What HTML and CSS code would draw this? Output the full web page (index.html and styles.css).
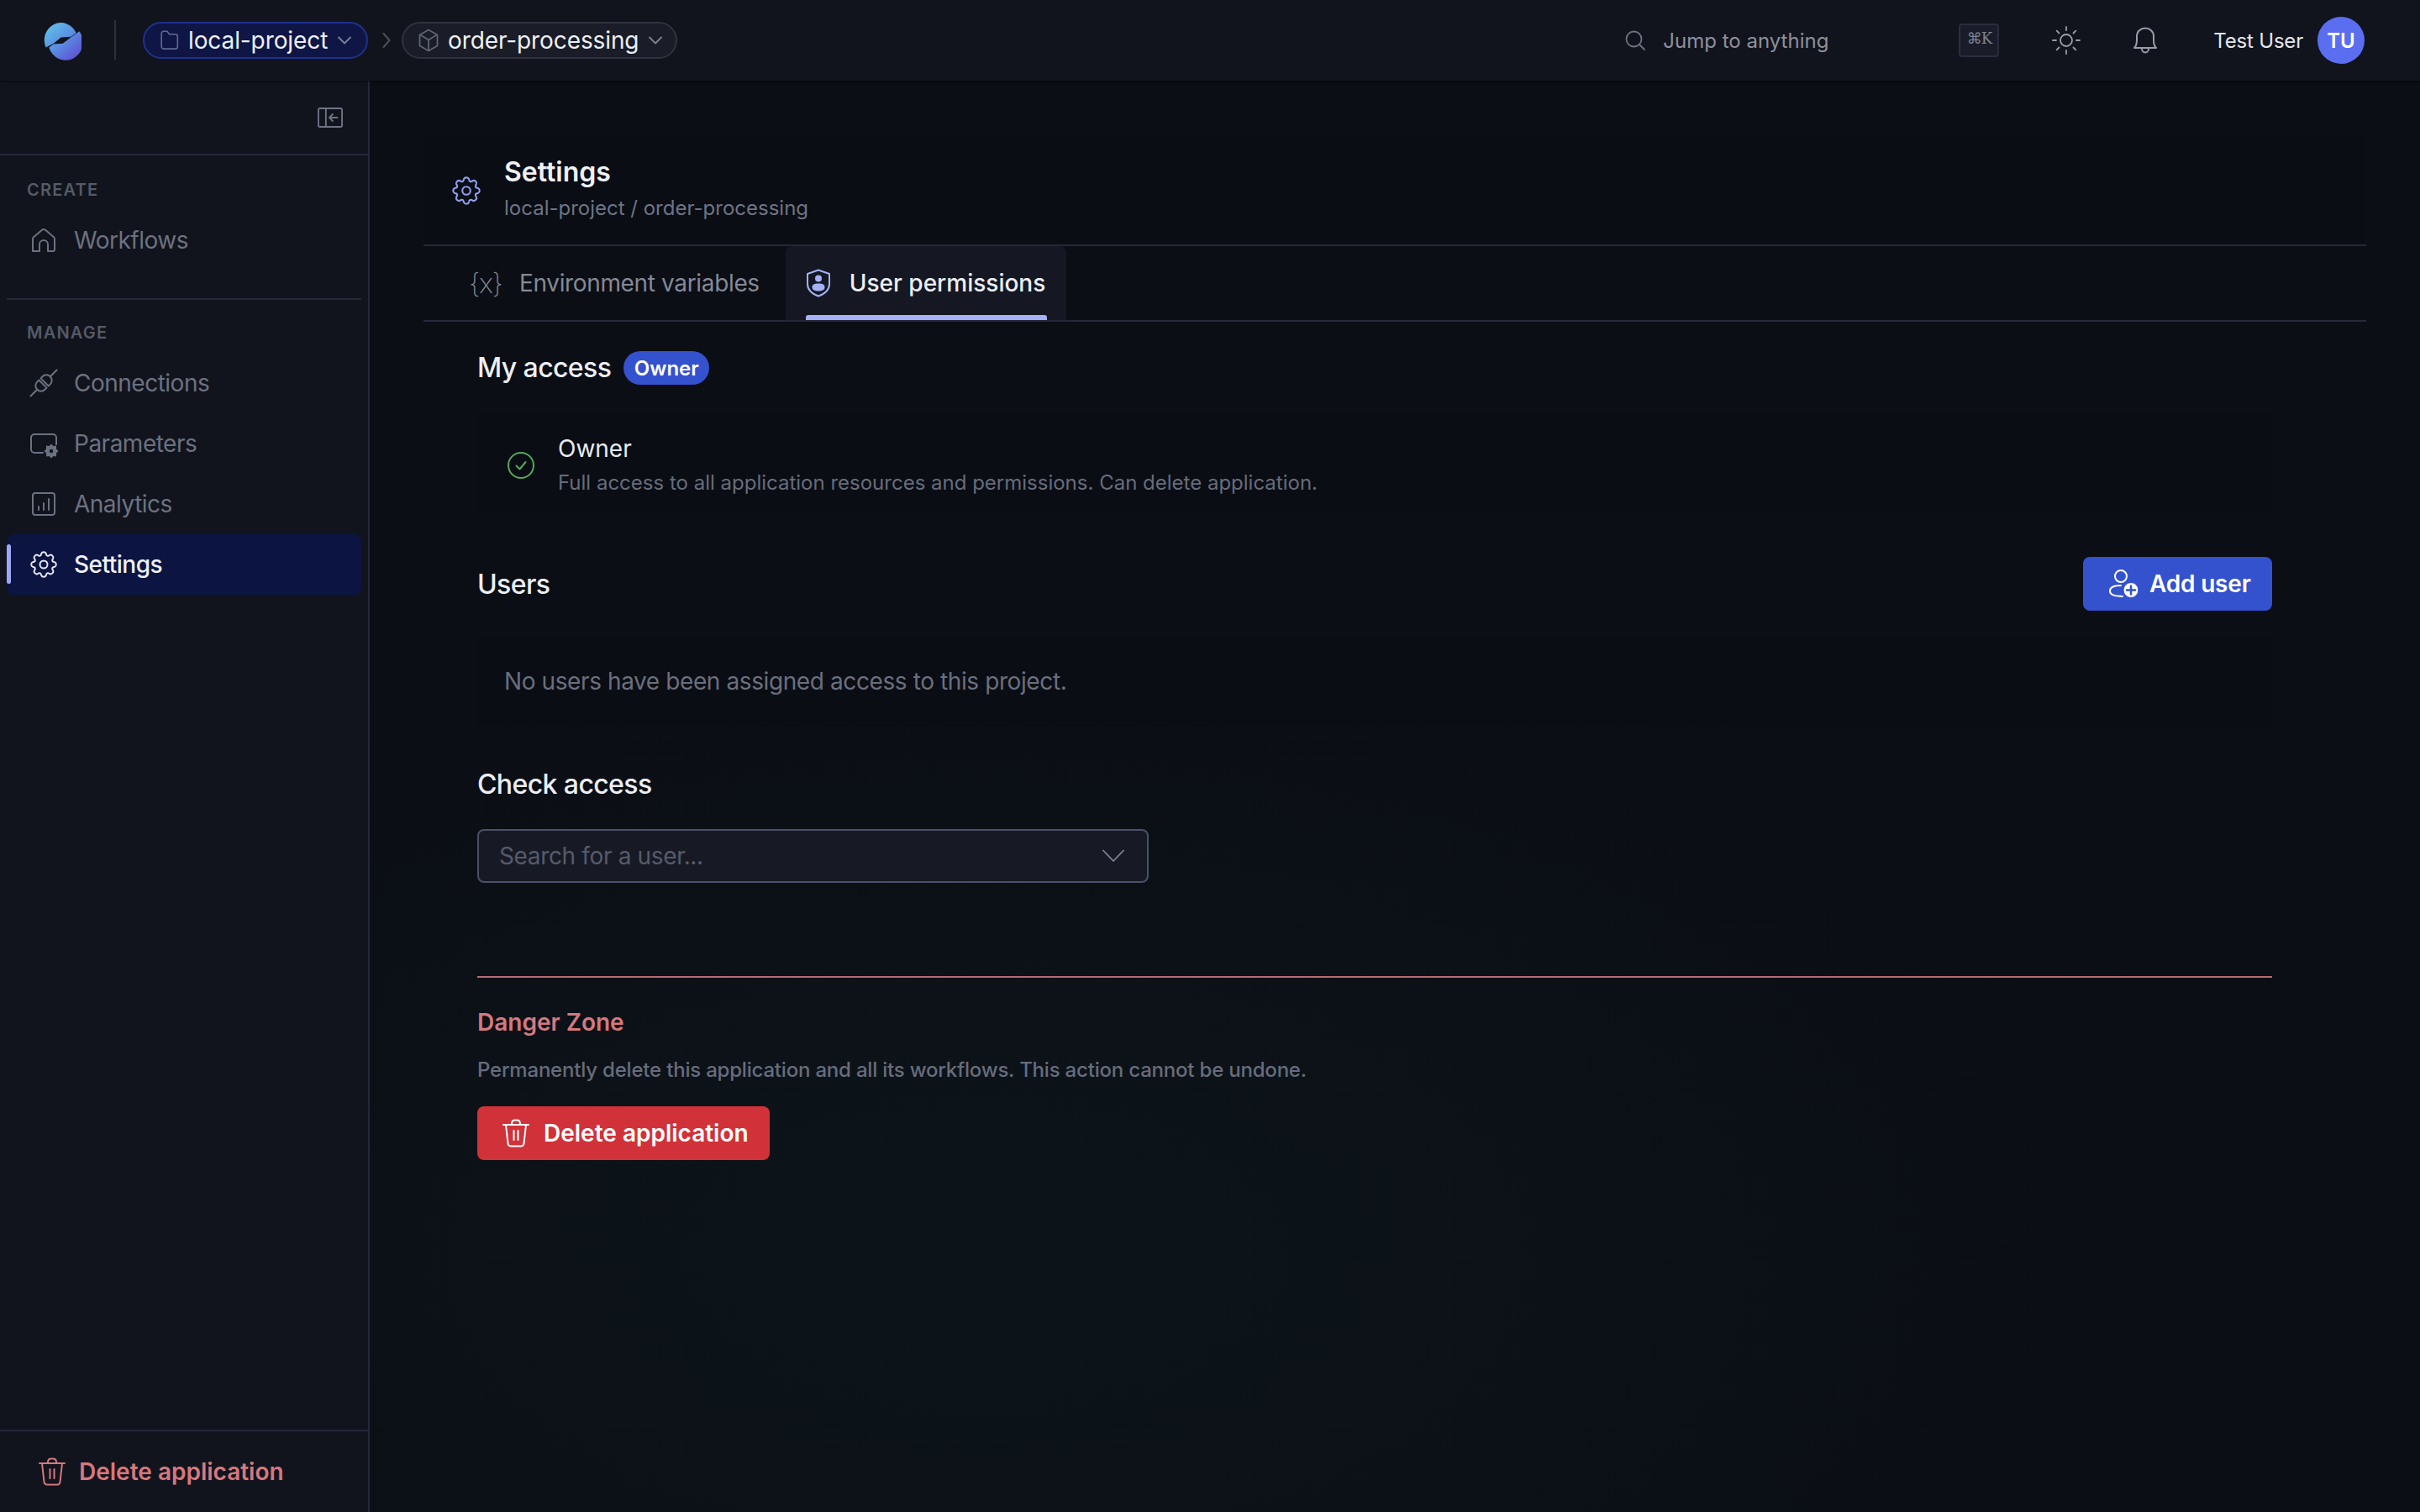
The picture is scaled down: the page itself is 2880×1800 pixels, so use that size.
FILE: index.html
```html
<!DOCTYPE html>
<html lang="en">
<head>
<meta charset="utf-8">
<title>Settings</title>
<link rel="stylesheet" href="styles.css">
</head>
<body>
<header class="topbar">
  <div class="top-left">
    <svg class="logo" viewBox="38 25 142 148" preserveAspectRatio="none"><defs><linearGradient id="lg" gradientUnits="userSpaceOnUse" x1="60" y1="40" x2="160" y2="160"><stop offset="0" stop-color="#5fc0ea"/><stop offset="0.5" stop-color="#5b90e2"/><stop offset="1" stop-color="#5c55d4"/></linearGradient></defs><path d="M46 126A62 62 0 1 1 160 74L140 88 103 90 75 112Z" fill="url(#lg)"/><path d="M172 68A65 65 0 1 1 58 126L75 114 110 112 140 90Z" fill="url(#lg)"/></svg>
    <span class="vr"></span>
    <div class="pill pill-blue">
      <svg class="pi" viewBox="0 0 24 28"><path d="M1.500 5.500A3 3 0 0 1 4.500 2.500H9L12 6.500H20A3 3 0 0 1 23 9.500V23A3 3 0 0 1 20 26H4.500A3 3 0 0 1 1.500 23Z" transform="scale(.96)"/></svg>
      <span class="pill-text">local-project</span>
      <svg class="chev" viewBox="0 0 16 10"><path d="M1 1.500 8 8.500 15 1.500"/></svg>
    </div>
    <svg class="crumb" viewBox="0 0 10 20"><path d="M1.500 2 8.500 10 1.500 18"/></svg>
    <div class="pill pill-gray">
      <svg class="pi" viewBox="0 0 24 28"><path d="M12 1.500 22.500 7.500V20.500L12 26.500 1.500 20.500V7.500Z"/><path d="M3 8 12 13.500 21 8M12 13.500V26"/></svg>
      <span class="pill-text">order-processing</span>
      <svg class="chev" viewBox="0 0 16 10"><path d="M1 1.500 8 8.500 15 1.500"/></svg>
    </div>
  </div>
  <div class="top-right">
    <div class="search">
      <svg class="search-ico" viewBox="0 0 24 24"><circle cx="10.500" cy="10.500" r="9"/><path d="M17 17 23 23"/></svg>
      <span class="search-text">Jump to anything</span>
    </div>
    <kbd class="kbd">⌘K</kbd>
    <svg class="sun" viewBox="0 0 34 34"><circle cx="17" cy="17" r="7"/><path d="M17 1V5M17 29V33M1 17H5M29 17H33M5.700 5.700 8.500 8.500M25.500 25.500 28.300 28.300M5.700 28.300 8.500 25.500M25.500 8.500 28.300 5.700"/></svg>
    <svg class="bell" viewBox="0 0 30 32"><path d="M2 25C4 23 5 20 5 16V11C5 5.500 9.500 1.500 15 1.500S25 5.500 25 11V16C25 20 26 23 28 25Z"/><path d="M11 26C11 29 13 30.500 15 30.500S19 29 19 26"/></svg>
    <span class="uname">Test User</span>
    <span class="avatar">TU</span>
  </div>
</header>
<div class="shell">
  <aside class="sidebar">
    <div class="collapse-row">
      <svg class="collapse" viewBox="0 0 32 24" preserveAspectRatio="none"><rect x="1" y="1" width="30" height="22" rx="2"/><path d="M10.500 1V23M25 12H15M19 8 15 12 19 16"/></svg>
    </div>
    <nav class="nav">
      <div class="sec sec-first">
        <div class="sec-label">CREATE</div>
        <a class="item"><svg class="ico" viewBox="0 0 32 32"><path d="M3 29V14.500C3 13.500 3.400 12.800 4 12.200L14 3.800C15.200 2.800 16.800 2.800 18 3.800L28 12.200C28.600 12.800 29 13.500 29 14.500V27C29 28.200 28 29 27 29H21V21A5 5 0 0 0 11 21V29H5C3.800 29 3 28.200 3 27Z"/></svg><span>Workflows</span></a>
      </div>
      <div class="sec">
        <div class="sec-label">MANAGE</div>
        <a class="item"><svg class="ico" viewBox="0 0 32 32"><g transform="rotate(-45 16 16)"><path d="M-6 16H5M27 16H38"/><path d="M14.500 9.500V22.500H11.500A6.500 6.500 0 0 1 11.500 9.500Z"/><path d="M17.500 9.500V22.500H20.500A6.500 6.500 0 0 0 20.500 9.500Z"/></g></svg><span>Connections</span></a>
        <a class="item"><svg class="ico" viewBox="0 0 32 32"><path d="M15 27H5A4 4 0 0 1 1 23V9A4 4 0 0 1 5 5H27A4 4 0 0 1 31 9V17"/><path class="solid" d="M25 16.500 27.500 19 31 18.500 31 22.500 33.500 25 31 27.500 31 31.500 27.500 31 25 33.500 22.500 31 19 31.500 19 27.500 16.500 25 19 22.500 19 18.500 22.500 19Z"/><circle class="hole" cx="25" cy="25" r="2.200"/></svg><span>Parameters</span></a>
        <a class="item"><svg class="ico" viewBox="0 0 32 32"><rect x="3" y="3" width="26" height="26" rx="3"/><path d="M10 19V23M16 15V23M22 10V23"/></svg><span>Analytics</span></a>
        <a class="item active"><span class="bar"></span><svg class="ico" viewBox="0 0 32 32"><use href="#gear"/></svg><span>Settings</span></a>
      </div>
    </nav>
    <div class="side-foot">
      <svg class="trash" viewBox="0 0 32 34"><path d="M1 7H31M4 7 6.500 29C6.700 31 8 32.500 10 32.500H22C24 32.500 25.300 31 25.500 29L28 7M11 7V5A4 4 0 0 1 15 1.500H17A4 4 0 0 1 21 5V7M13.500 14V25M18.500 14V25"/></svg>
      <span>Delete application</span>
    </div>
  </aside>
  <main class="main">
    <section class="page-head">
      <svg class="head-gear" viewBox="0 0 32 32"><use href="#gear"/></svg>
      <div class="head-text">
        <h1 class="title">Settings</h1>
        <div class="subtitle">local-project / order-processing</div>
      </div>
    </section>
    <div class="tabs">
      <a class="tab tab-env"><span class="tab-ico-x">{x}</span><span>Environment variables</span></a>
      <a class="tab tab-active"><svg class="shield" viewBox="0 0 30 34"><path d="M15 1.500 28 6V18C28 25 22 30 15 32.500 8 30 2 25 2 18V6Z"/><circle class="f" cx="15" cy="11.500" r="4"/><path class="f" d="M7.500 22C7.500 18.500 10 17.500 15 17.500S22.500 18.500 22.500 22 19 26.500 15 26.500 7.500 25.500 7.500 22Z"/></svg><span>User permissions</span></a>
    </div>
    <div class="content">
      <div class="h-row">
        <h2 class="h2">My access</h2>
        <span class="badge">Owner</span>
      </div>
      <div class="access-card">
        <svg class="check" viewBox="0 0 32 32"><circle cx="16" cy="16" r="15"/><path d="M10.500 16.500 14.500 20.500 21.500 12"/></svg>
        <div>
          <div class="role">Owner</div>
          <div class="desc">Full access to all application resources and permissions. Can delete application.</div>
        </div>
      </div>
      <div class="users-row">
        <h2 class="h2 h-users">Users</h2>
        <button class="btn btn-blue"><svg class="btn-ico" viewBox="0 0 36 34"><circle cx="15" cy="8" r="7"/><path d="M15 19C9 19 2 20 2 25.500S9 31.500 17 32"/><circle class="fw" cx="27" cy="24.500" r="9"/><path class="pl" d="M27 19.500V29.500M22 24.500H32"/></svg>Add user</button>
      </div>
      <div class="empty">No users have been assigned access to this project.</div>
      <h2 class="h2 h-check">Check access</h2>
      <div class="select">
        <span>Search for a user...</span>
        <svg class="sel-chev" viewBox="0 0 26 16"><path d="M1 1.500 13 14 25 1.500"/></svg>
      </div>
      <div class="danger">
        <h3 class="danger-title">Danger Zone</h3>
        <p class="desc danger-desc">Permanently delete this application and all its workflows. This action cannot be undone.</p>
        <button class="btn btn-red"><svg class="trash trash-w" viewBox="0 0 32 34"><path d="M1 7H31M4 7 6.500 29C6.700 31 8 32.500 10 32.500H22C24 32.500 25.300 31 25.500 29L28 7M11 7V5A4 4 0 0 1 15 1.500H17A4 4 0 0 1 21 5V7M13.500 14V25M18.500 14V25"/></svg>Delete application</button>
      </div>
    </div>
  </main>
</div>
<svg class="defs" width="0" height="0"><defs><g id="gear"><path d="M13.400 2.600C14 .8 18 .8 18.600 2.600L19.200 4.500C19.500 5.600 20.800 6.100 21.800 5.600L23.600 4.700C25.300 3.900 28.100 6.700 27.300 8.400L26.400 10.200C25.900 11.200 26.400 12.500 27.500 12.800L29.400 13.400C31.200 14 31.200 18 29.400 18.600L27.500 19.200C26.400 19.500 25.900 20.800 26.400 21.800L27.300 23.600C28.100 25.300 25.300 28.100 23.600 27.300L21.800 26.400C20.800 25.900 19.500 26.400 19.200 27.500L18.600 29.400C18 31.200 14 31.200 13.400 29.400L12.800 27.500C12.500 26.400 11.200 25.900 10.200 26.400L8.400 27.300C6.700 28.100 3.900 25.300 4.700 23.600L5.600 21.800C6.100 20.800 5.600 19.500 4.500 19.200L2.600 18.600C.8 18 .8 14 2.600 13.400L4.500 12.800C5.600 12.500 6.100 11.200 5.600 10.200L4.700 8.400C3.900 6.700 6.700 3.900 8.400 4.700L10.200 5.600C11.200 6.100 12.500 5.600 12.800 4.500Z"/><circle cx="16" cy="16" r="4.500"/></g></defs></svg>
</body>
</html>
```

FILE: styles.css
```css
* { box-sizing: border-box; }
html, body { margin: 0; height: 100%; }
body {
  width: 2880px; height: 1800px; overflow: hidden;
  display: flex; flex-direction: column;
  background: #0b0e14; color: #e8eaf0;
  font-family: Inter, "Liberation Sans", sans-serif;
  font-size: 28px;
}
svg { display: block; flex: none; fill: none; stroke-linecap: round; stroke-linejoin: round; }
.defs { position: absolute; }
h1, h2, h3, p { margin: 0; font-weight: 500; }

.topbar {
  height: 96px; flex: none; display: flex; align-items: center; justify-content: space-between;
  background: #11141c; padding: 0 66px 0 52px;
  box-shadow: 0 1px 3px rgba(0,0,0,.55); position: relative; z-index: 2;
}
.top-left, .top-right { display: flex; align-items: center; }
.logo { width: 45px; height: 49px; margin-bottom: 1px; }
.vr { width: 2px; height: 48px; background: #2a2e3e; margin: 0 32px 0 39px; }
.pill { height: 44px; border-radius: 22px; display: flex; align-items: center; border: 2px solid; color: #eceef4; }
.pill-blue { width: 268px; background: #0f1645; border-color: #1f3190; padding-left: 18px; }
.pill-gray { width: 328px; background: #1a1c27; border-color: #30333f; padding-left: 18px; }
.pi { width: 24px; height: 28px; stroke: #5f6475; stroke-width: 1.800; }
.pill-blue .pi { height: 26px; stroke: #626a92; }
.pill-text { font-size: 28px; margin-left: 10px; line-height: 40px; letter-spacing: -.1px; }
.pill-gray .pill-text { margin-left: 11px; }
.chev { width: 16px; height: 10px; stroke: #7d8294; stroke-width: 1.800; margin-left: 12px; }
.crumb { width: 10px; height: 20px; stroke: #4b4f5e; stroke-width: 2; margin: 0 13px 0 17px; }

.search { display: flex; align-items: center; width: 397px; }
.search-ico { width: 24px; height: 24px; stroke: #6f7382; stroke-width: 1.800; }
.search-text { font-size: 24px; color: #8d909c; margin-left: 21px; }
.kbd {
  width: 48px; height: 40px; background: #1a1d29; border: 2px solid #2a2d3d; border-radius: 4px;
  font-family: "DejaVu Serif", serif; font-size: 18px; color: #7e8292; display: flex; justify-content: center; padding-top: 6px; line-height: 20px; letter-spacing: -1px;
}
.sun { width: 34px; height: 34px; stroke: #9a9daa; stroke-width: 1.800; margin-left: 63px; }
.bell { width: 30px; height: 32px; stroke: #9a9daa; stroke-width: 2; margin-left: 62px; }
.uname { font-size: 24px; color: #e4e6ec; margin-left: 66px; letter-spacing: -.2px; }
.avatar {
  width: 56px; height: 56px; border-radius: 50%; background: #5b6ef0; color: #fff;
  display: flex; align-items: center; justify-content: center; font-size: 24px; font-weight: 600; margin-left: 17px;
}

.shell { flex: 1; display: flex; min-height: 0; }
.sidebar {
  width: 440px; flex: none; background: #11141c; border-right: 2px solid #25273a;
  display: flex; flex-direction: column;
}
.collapse-row { height: 89px; flex: none; border-bottom: 2px solid #25273a; display: flex; align-items: center; justify-content: flex-end; padding: 0 30px 0 0; }
.collapse { width: 30px; height: 24px; stroke: #6f7384; stroke-width: 2; }
.nav { flex: 1; }
.sec { padding: 26px 8px 0; }
.sec-first { padding-top: 27px; height: 171px; }
.sec-first::after { content: ""; display: block; height: 2px; background: #25273a; margin-top: 33px; }
.sec-label { height: 28px; line-height: 28px; font-size: 20px; font-weight: 600; letter-spacing: 1.200px; color: #555a69; padding-left: 24px; }
.item {
  height: 72px; display: flex; align-items: center; padding-left: 28px; font-size: 28px; color: #6c7181;
  border-radius: 8px; position: relative; letter-spacing: -.5px;
}
.sec-first .sec-label + .item { margin-top: 9px; }
.sec .sec-label + .item { margin-top: 10px; }
.ico { width: 32px; height: 32px; stroke: #6c7181; stroke-width: 2; margin-right: 20px; overflow: visible; }
.ico .solid { fill: #6c7181; stroke: none; }
.ico .hole { fill: #11141c; stroke: none; }
.active { background: #0c1442; color: #eef0f6; font-weight: 500; }
.active .ico { stroke: #e4e7f6; }
.bar { position: absolute; left: 0; top: 12px; width: 5px; height: 47px; border-radius: 3px; background: #9ba8f8; }
.side-foot {
  height: 98px; flex: none; border-top: 2px solid #25273a; display: flex; align-items: center;
  padding-left: 46px; color: #d6787f; font-weight: 600;
}
.side-foot .trash { margin-right: 16px; }
.trash { width: 32px; height: 34px; stroke: #d6787f; stroke-width: 2; }

.main {
  flex: 1; min-width: 0; padding: 64px 64px 0;
  background:
    radial-gradient(1500px 800px at 30% 82%, #0c141a 0%, rgba(12,20,26,0) 100%),
    #0b0e14;
}
.page-head {
  height: 133px; display: flex; align-items: center; gap: 28px; padding-left: 34px;
  background: #0a0d13; border-bottom: 2px solid #252838;
}
.head-gear { width: 34px; height: 34px; stroke: #8f9cf0; stroke-width: 2; margin-top: 3px; }
.head-text { margin-top: -3px; }
.title { font-size: 32px; font-weight: 600; color: #eef0f5; line-height: 40px; }
.subtitle { font-size: 24px; color: #6f7484; line-height: 30px; margin-top: 8px; }
.tabs { height: 90px; display: flex; padding-left: 31px; border-bottom: 2px solid #252838; }
.tab { display: flex; align-items: center; font-size: 28px; color: #858997; height: 88px; padding: 0 24px; position: relative; }
.tab-env { letter-spacing: -.35px; }
.tab-ico-x { width: 32px; font-size: 33px; font-weight: 200; color: #808492; margin: 0 28px 0 -1px; text-align: center; letter-spacing: -1.500px; line-height: 34px; white-space: nowrap; }
.tab-active { background: #151822; color: #eceef5; font-weight: 500; border-radius: 8px 8px 0 0; margin-left: 7px; width: 334px; }
.tab-active::after { content: ""; position: absolute; left: 24px; right: 23px; bottom: 0; height: 6px; border-radius: 3px 3px 0 0; background: #a5b0f5; }
.shield { width: 30px; height: 34px; stroke: #a5b0f5; stroke-width: 2; margin-right: 22px; }
.shield .f { fill: #a5b0f5; stroke: none; }
.content { padding: 35px 112px 0 64px; }
.h-row { display: flex; align-items: center; gap: 15px; height: 40px; }
.h2 { font-size: 32px; font-weight: 500; color: #eceef5; line-height: 40px; letter-spacing: -.6px; }
.h-users { margin-top: 2px; }
.badge { height: 40px; width: 102px; border-radius: 20px; background: #3451ce; color: #fff; font-size: 24px; font-weight: 600; display: flex; align-items: center; justify-content: center; letter-spacing: 0; }
.access-card {
  margin-top: 32px; height: 120px; display: flex; align-items: center; gap: 28px; padding: 7px 0 0 36px; background: #0a0d13;
}
.check { width: 32px; height: 32px; stroke: #55a85c; stroke-width: 2; }
.role { font-size: 28px; line-height: 36px; color: #e8eaf0; }
.desc { font-size: 24px; line-height: 32px; color: #676c7c; margin-top: 7px; }
.users-row { display: flex; justify-content: space-between; align-items: center; height: 64px; margin-top: 53px; }
.btn { display: flex; align-items: center; height: 64px; border: 0; border-radius: 8px; color: #fff; font: 600 28px Inter, "Liberation Sans", sans-serif; }
.btn-blue { width: 225px; background: #3451ce; padding: 0 0 0 30px; letter-spacing: -.2px; }
.btn-ico { width: 36px; height: 34px; stroke: #fff; stroke-width: 2; margin-right: 13px; }
.btn-ico .fw { fill: #fff; stroke: #3451ce; stroke-width: 1; }
.btn-ico .pl { stroke: #3451ce; stroke-width: 2.500; }
.empty { margin-top: 30px; height: 108px; display: flex; align-items: center; padding-left: 32px; background: #0a0d13; color: #6a6f7e; font-size: 28px; letter-spacing: -.4px; }
.h-check { margin-top: 49px; }
.select {
  margin-top: 33px; width: 799px; height: 64px; background: #171a25; border: 2px solid #4a5068; border-radius: 8px;
  display: flex; align-items: center; justify-content: space-between; padding: 0 27px 0 24px; color: #565b6b; font-size: 28px; letter-spacing: -.35px;
}
.sel-chev { width: 26px; height: 16px; stroke: #7d8294; stroke-width: 1.800; }
.danger { margin-top: 111px; border-top: 2px solid #b86a72; padding-top: 35px; }
.danger-title { font-size: 28px; font-weight: 600; color: #d6787f; line-height: 36px; }
.danger-desc { margin-top: 23px; letter-spacing: -.2px; }
.btn-red { margin-top: 27px; width: 348px; background: #d13239; padding-left: 30px; }
.trash-w { stroke: #fff; margin-right: 17px; }
```
